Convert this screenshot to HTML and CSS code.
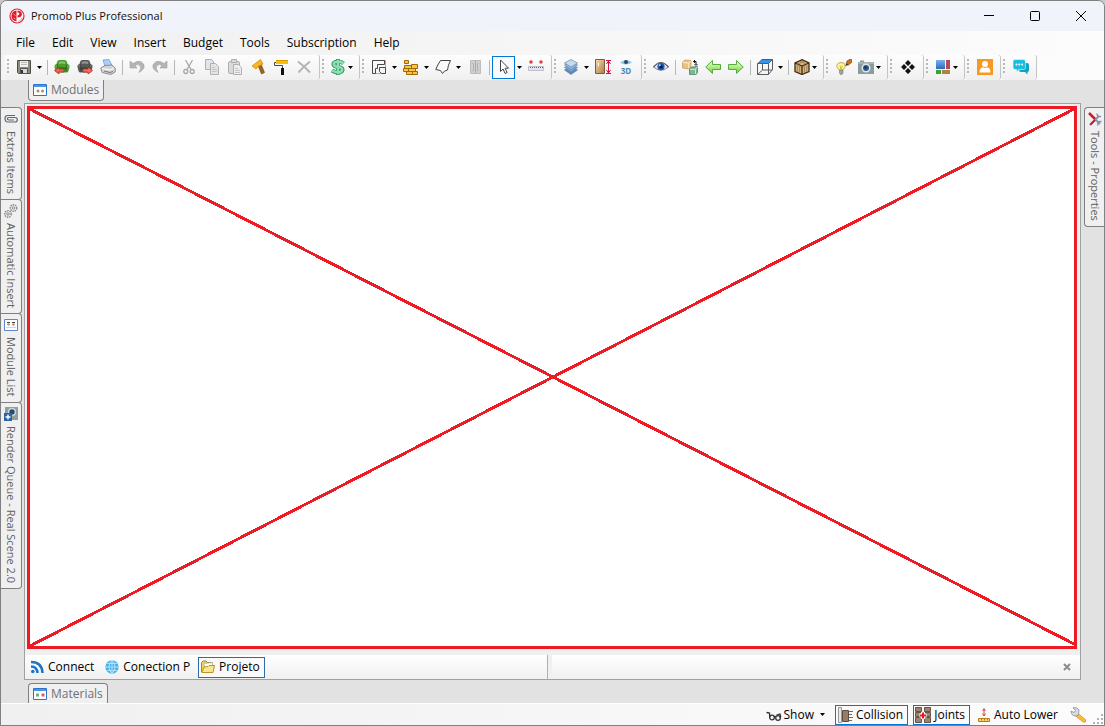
FILE: index.html
```html
<!DOCTYPE html>
<html lang="en">
<head>
<meta charset="utf-8">
<title>Promob Plus Professional</title>
<link rel="stylesheet" href="styles.css">
</head>
<body>
<svg class="defs" aria-hidden="true">
  <defs>
    <linearGradient id="gGreen" x1="0" y1="0" x2="0" y2="1"><stop offset="0" stop-color="#e4f8c8"/><stop offset=".5" stop-color="#b4ec88"/><stop offset="1" stop-color="#5cc83c"/></linearGradient>
    <linearGradient id="gWood" x1="0" y1="0" x2="1" y2="1"><stop offset="0" stop-color="#f8dcae"/><stop offset="1" stop-color="#a87c48"/></linearGradient>
    <linearGradient id="gBlue" x1="0" y1="0" x2="0" y2="1"><stop offset="0" stop-color="#78b4f0"/><stop offset="1" stop-color="#2c68b8"/></linearGradient>
    <symbol id="sofa" viewBox="0 0 16 16"><path d="M3 3Q3.500 1 5.500 1H10.500Q12.500 1 13 3L13.500 5Q16 5.500 15.500 8L14.500 12Q14 13.500 12.500 13.500H3.500Q2 13.500 1.500 12L.5 8Q0 5.500 2.500 5z"/><path d="M4.500 3Q8 1.500 11.500 3L11 5Q8 4 5 5z" fill="#fff" opacity=".35"/><path d="M4 9.500Q8 8 12 9.500M3 5.500Q4.500 8 4 12.500M13 5.500Q11.500 8 12 12.500" stroke="#111" fill="none" opacity=".5"/><path d="M1.500 7Q2.500 6 3 7.500M13 7.500Q13.500 6 14.500 7" stroke="#fff" fill="none" opacity=".4"/></symbol>
    <symbol id="grid2" viewBox="0 0 14 12"><path d="M.5.5h13v11H.5z" fill="#fff" stroke="#2c74cc"/><path d="M1 1h12v2H1z" fill="#4c94e4"/></symbol>
  </defs>
</svg>
<div class="window">
  <header class="titlebar">
    <svg class="logo" viewBox="0 0 16 16"><circle cx="8" cy="8" r="7" fill="#fff" stroke="#dc2430" stroke-width="1.200"/><path d="M7.500 2.500V13.500Q2.500 12.500 2.500 8Q2.500 3 7.500 2.500z" fill="#dc1c2c"/><path d="M8.500 2.500Q13 3 13 6.500Q12.500 9.500 8.500 9.500V7.500Q10.500 7 10.500 5.800Q10 4.500 8.500 4.500z" fill="#dc1c2c"/><path d="M9 13.500Q12.500 12.500 13.300 9.500" fill="none" stroke="#f0a0a4"/><path d="M4.500 6L6.500 7.500M4.500 10L6.500 11" stroke="#f49aa0"/></svg>
    <h1 class="title">Promob Plus Professional</h1>
    <div class="caption">
      <button class="cap" aria-label="Minimize"><svg viewBox="0 0 12 12"><path d="M1 5.500h10" /></svg></button>
      <button class="cap" aria-label="Maximize"><svg viewBox="0 0 12 12"><rect x="1.500" y="1.500" width="9" height="9" rx="1"/></svg></button>
      <button class="cap" aria-label="Close"><svg viewBox="0 0 12 12"><path d="M1 1l10 10M11 1L1 11"/></svg></button>
    </div>
  </header>

  <nav class="menubar">
    <button>File</button><button>Edit</button><button>View</button><button>Insert</button><button>Budget</button><button>Tools</button><button>Subscription</button><button>Help</button>
  </nav>

  <div class="toolbar">
    <div class="group">
      <button class="tool" aria-label="Save"><svg viewBox="0 0 16 16"><path d="M1.500 1.500h13v13h-12l-1-1z" fill="#8c8c78" stroke="#4c4c48"/><path d="M4 2h8v6H4z" fill="#f0f0ec"/><path d="M5 3.500h6M5 5.500h6" stroke="#bbb"/><path d="M4.500 9.500h7v5h-7z" fill="#d8d8d4" stroke="#555"/><path d="M5 11h2v3H5z" fill="#333"/></svg></button>
      <button class="drop" aria-label="Save options"></button>
      <i class="sep"></i>
      <button class="tool" aria-label="Import module"><svg viewBox="0 0 16 16"><use href="#sofa" fill="#48a028"/><path d="M.5 11.500L5 8v2h5v3H5v2z" fill="#e8685c" stroke="#b02c20" stroke-width=".8"/></svg></button>
      <button class="tool" aria-label="Export module"><svg viewBox="0 0 16 16"><use href="#sofa" fill="#585858"/><path d="M15.500 11.500L11 8v2H6v3h5v2z" fill="#f4705c" stroke="#b02c20" stroke-width=".8"/></svg></button>
      <button class="tool" aria-label="Print"><svg viewBox="0 0 16 16"><path d="M3 1l6-.5 3 6-7 1z" fill="#a8d0f8" stroke="#6c94c8" stroke-width=".7"/><path d="M.8 9L5 6.500l7-.5 3.200 3v4L11 15.500 2 13.500z" fill="#d4d4d8" stroke="#78787c" stroke-width=".8"/><path d="M2 9.500l8 1.500 4-2" stroke="#fff" fill="none"/><path d="M4 12l6 1.500 3-1" stroke="#777" fill="none"/></svg></button>
      <i class="sep"></i>
      <button class="tool" aria-label="Undo"><svg viewBox="0 0 16 16"><path d="M1 2v7h7L6 6.500Q9 4.500 11 6.500Q13 9 10 13.500Q17 9.500 14.500 5Q11 0 4 4.500z" fill="#b4b4b4" stroke="#a0a0a0" stroke-width=".6"/></svg></button>
      <button class="tool" aria-label="Redo"><svg viewBox="0 0 16 16"><path d="M15 2v7H8L10 6.500Q7 4.500 5 6.500Q3 9 6 13.500Q-1 9.500 1.500 5Q5 0 12 4.500z" fill="#b4b4b4" stroke="#a0a0a0" stroke-width=".6"/></svg></button>
      <i class="sep"></i>
      <button class="tool" aria-label="Cut"><svg viewBox="0 0 16 16" fill="none" stroke="#a8a8a8" stroke-width="1.300"><path d="M4.500 1L10 10.500M11.500 1L6 10.500"/><circle cx="4.800" cy="12.500" r="2"/><circle cx="11.200" cy="12.500" r="2"/></svg></button>
      <button class="tool" aria-label="Copy"><svg viewBox="0 0 16 16" fill="#e4e4e4" stroke="#b0b0b0"><path d="M1.500.5h6l2 2v8h-8z"/><path d="M6.500 4.500h5l3 3v8h-8z"/><path d="M8 8.500h3M8 10.500h5M8 12.500h5" stroke="#c4c4c4"/></svg></button>
      <button class="tool" aria-label="Paste"><svg viewBox="0 0 16 16" fill="#dadada" stroke="#b0b0b0"><rect x="1.500" y="2.500" width="11" height="12" rx="1.500"/><path d="M4.500.5h5v3h-5z"/><path d="M6.500 5.500h5l3 3v7h-8z" fill="#eee"/><path d="M8 9.500h3M8 11.500h5M8 13.500h5" stroke="#c4c4c4"/></svg></button>
      <button class="tool" aria-label="Build"><svg viewBox="0 0 16 16"><path d="M8 6.500l3-1.500 3.500 8.500-3 1.500z" fill="#9c6420" stroke="#704410" stroke-width=".6"/><path d="M2 7L10.500.5 13 5 8 7.500 6 10z" fill="#f8b81c" stroke="#c88408" stroke-width=".7"/></svg></button>
      <button class="tool" aria-label="Paint"><svg viewBox="0 0 16 16"><path d="M3 1h12v4H3z" fill="#f8bc0c"/><path d="M3 1h12v1H3z" fill="#d89c00"/><path d="M3 3.500H1.500v3h8V9" fill="none" stroke="#484848"/><path d="M8 9h3v7H8z" fill="#111"/></svg></button>
      <button class="tool" aria-label="Delete"><svg viewBox="0 0 16 16"><path d="M2 2.500Q8 7 14 13.500M14 2.500Q7 8 2.500 13.500" fill="none" stroke="#b4b4b4" stroke-width="2"/></svg></button>
    </div>
    <div class="group">
      <button class="tool tight" aria-label="Budget"><svg viewBox="0 0 16 16"><path d="M8 0v16M13.500 4.500Q11 2 7.500 2.500Q3 3 3.500 5.500Q4 7.500 8 8Q13 8.500 12.500 11Q12 13.500 8 13.500Q5 13.500 2 11.500" fill="none" stroke="#3c9870" stroke-width="4"/><path d="M8 .8v14.400M13.500 4.500Q11 2.300 7.500 2.600Q3.300 3 3.800 5.500Q4.300 7.500 8 8Q12.700 8.500 12.200 11Q11.700 13.400 8 13.400Q5 13.400 2.200 11.500" fill="none" stroke="#8ce0b0" stroke-width="2.400"/></svg></button>
      <button class="drop" aria-label="Budget options"></button>
    </div>
    <div class="group">
      <button class="tool" aria-label="Room"><svg viewBox="0 0 16 16" fill="none"><path d="M1.500 1.500h13v13h-13z" stroke="#e49090"/><path d="M1.500 14.500v-13h12v4h-7v4h-2v5z" stroke="#484848"/><path d="M8.500 8.500h6v6h-4l-2-2z" stroke="#484848" fill="#f4f4f4"/></svg></button>
      <button class="drop" aria-label="Room options"></button>
      <button class="tool" aria-label="Walls"><svg viewBox="0 0 16 16" fill="#f8c448" stroke="#a46800"><path d="M1.500 1.500h4v3h-4zM1.500 6.500h7v3h-7zM8.500 5.500h6v4h-6zM.5 9.500h5v3h-5zM5.500 9.500h7v3h-7zM3.500 12.500h6v3h-6zM9.500 12.500h5v3h-5z"/></svg></button>
      <button class="drop" aria-label="Wall options"></button>
      <button class="tool" aria-label="Shape"><svg viewBox="0 0 16 16"><path d="M5.500 1.500H15.500Q13 6 12.500 11Q9 11.500 7.500 14.500L5.500 11.500.8 10.500Q2.500 6 5.500 1.500z" fill="#fafafa" stroke="#444"/></svg></button>
      <button class="drop" aria-label="Shape options"></button>
      <button class="tool" aria-label="Cabinet"><svg viewBox="0 0 16 16"><path d="M3.500 1.500h10v13h-10z" fill="#d0d0d0" stroke="#bcbcbc"/><path d="M8.500 2v12" stroke="#ababab"/><path d="M5.500 4.500h1v7h-1M11.500 4.500h-1v7h1" fill="none" stroke="#b0b0b0"/></svg></button>
      <i class="sep"></i>
      <button class="tool active" aria-label="Select"><svg viewBox="0 0 16 16"><path d="M4.500 1v11.500l2.600-2.500 2 4.500 2-1-2-4.300h3.500z" fill="#fff" stroke="#444"/></svg></button>
      <button class="drop" aria-label="Selection options"></button>
      <button class="tool" aria-label="Dimension"><svg viewBox="0 0 16 16"><circle cx="3" cy="3" r="1.800" fill="#d84848"/><circle cx="13" cy="3" r="1.800" fill="#d84848"/><path d="M.5 7.500h15v4H.5z" fill="#e4e4ec" stroke="#c0c0cc"/><path d="M2 8.500h13" stroke="#666" stroke-dasharray="1 1"/></svg></button>
    </div>
    <div class="group">
      <button class="tool" aria-label="Layers"><svg viewBox="0 0 16 16" stroke="#6484ac" stroke-width=".7"><path d="M1.500 11l6.500 4.500L14.500 11 8 7z" fill="#5c88bc"/><path d="M1.500 8.500L8 13l6.500-4.500L8 4.500z" fill="#7ca4d0"/><path d="M1.500 6l6.500 4.500L14.500 6 8 2.500z" fill="#94bce0"/><path d="M1.500 4L8 8l6.500-4L8 .5z" fill="#c4dcf0"/></svg></button>
      <button class="drop" aria-label="Layer options"></button>
      <button class="tool" aria-label="Height"><svg viewBox="0 0 16 16"><path d="M.5.5h9v14h-9z" fill="url(#gWood)" stroke="#805c30"/><path d="M3.500 4v3" stroke="#fff"/><path d="M11 1.500h5M11 14.500h5M13.500 2v12M11.500 5l2-3 2 3M11.500 11l2 3 2-3" stroke="#d80c4c" fill="none"/></svg></button>
      <button class="tool" aria-label="3D view"><svg viewBox="0 0 16 16"><path d="M2 3.500Q8-1.500 14 3.500Q8 7.500 2 3.500z" fill="#90c4e0"/><circle cx="8" cy="3" r="2" fill="#284c6c"/><text x="8" y="15" class="threeD">3D</text></svg></button>
    </div>
    <div class="group">
      <button class="tool" aria-label="View"><svg viewBox="0 0 16 16"><path d="M.5 8Q8 0 15.500 8Q8 14.500 .5 8z" fill="#e8ecf4" stroke="#808898"/><path d="M.5 8Q8-1 15.500 8" fill="none" stroke="#585c70" stroke-width="1.200"/><circle cx="8" cy="7.700" r="3.600" fill="#1c58b4"/><circle cx="8" cy="7.700" r="1.700" fill="#081838"/><circle cx="6.700" cy="6.300" r="1" fill="#c0dcfc"/></svg></button>
      <i class="sep"></i>
      <button class="tool" aria-label="Replace"><svg viewBox="0 0 16 16"><path d="M.5 3l2.500-2 6 .5v6L7 10 .5 9z" fill="#ecc080" stroke="#c09860" stroke-width=".7"/><path d="M.8 3.500l6 .5L9 1.700M6.800 4v5.500" stroke="#fff0d0" fill="none"/><path d="M7.500 10l2-2 6-.5v6L13.500 16l-6-.5z" fill="#7cb494" stroke="#3c7458" stroke-width=".7"/><path d="M8 10.500l5.500-.3 2-2.300M13.500 10.500V15" stroke="#c8ecd8" fill="none"/><path d="M11.500 2.500H14v3M12.500 5L14 6.500 15.500 5M13 1l-1.500 1.500L13 4" fill="none" stroke="#111"/></svg></button>
      <button class="tool" aria-label="Previous"><svg viewBox="0 0 16 16"><path d="M.7 8L7.500 1.500V5.500h8v5h-8v4z" fill="url(#gGreen)" stroke="#54ac3c"/></svg></button>
      <button class="tool" aria-label="Next"><svg viewBox="0 0 16 16"><path d="M15.300 8L8.500 1.500V5.500h-8v5h8v4z" fill="url(#gGreen)" stroke="#54ac3c"/></svg></button>
      <i class="sep"></i>
      <button class="tool" aria-label="Perspective"><svg viewBox="0 0 16 16" fill="none" stroke="#585c60"><path d="M5 .5h10.500L11.500 4.500H.8z" fill="#3494ec"/><path d="M.5 4.500h11v11H.5zM15.500.5v10l-4 5M5.500 5v6h10M5.500 11l-5 4.500"/></svg></button>
      <button class="drop" aria-label="Perspective options"></button>
      <i class="sep"></i>
      <button class="tool tight" aria-label="Material view"><svg viewBox="0 0 16 16" stroke="#3c2c18"><path d="M8 .7L15 4v8.500L8 15.500 1 12.500V4z" fill="#d8b47c" stroke-width="1.300"/><path d="M1 4l7 3 7-3M8 7v8.500" fill="none" stroke-width="1.300"/><path d="M3.300 5.500v7.500M5.600 6.500v7.500M10.500 6.500v7.500M12.800 5.500v7.500M5.500 2l7 3M10.500 2l-7 3" stroke="#a88450" fill="none"/></svg></button>
      <button class="drop" aria-label="Material options"></button>
    </div>
    <div class="group wide">
      <button class="tool" aria-label="Lighting"><svg viewBox="0 0 16 16"><path d="M3.500 11Q.5 8.500 .7 6.500Q1.500 3.500 5 3.500Q8.800 3.500 9.300 6.500Q9.500 8.500 6.800 11z" fill="#fcf4a8" stroke="#c4a848"/><path d="M3.500 11h3.500v3l-1 1.500H4.500l-1-1.500z" fill="#a4a498" stroke="#777" stroke-width=".6"/><path d="M4 6.500l1 4 1.500-4" stroke="#e0b820" fill="none"/><path d="M10 5.500L11 2 14.500 0l1.500 1v2L12.500 6z" fill="#c87420" stroke="#784010" stroke-width=".7"/><path d="M9 7L11 4.500 12 6z" fill="#222"/></svg></button>
      <button class="tool tight" aria-label="Camera"><svg viewBox="0 0 16 16"><path d="M0 3h2V1.500h4V3h10v12H0z" fill="#8c9c9c"/><path d="M0 3h16v2H0z" fill="#a8b4b4"/><circle cx="8" cy="9" r="4.500" fill="#dce8f0"/><circle cx="8" cy="9" r="3" fill="#345c84"/><circle cx="7.500" cy="8.500" r="1.200" fill="#142c44"/></svg></button>
      <button class="drop" aria-label="Camera options"></button>
    </div>
    <div class="group wide">
      <button class="tool" aria-label="Components"><svg viewBox="0 0 16 16"><path d="M8 1l3 3-3 3-3-3zM8 9l3 3-3 3-3-3zM4 5l3 3-3 3-3-3zM12 5l3 3-3 3-3-3z" fill="#111"/></svg></button>
    </div>
    <div class="group wide">
      <button class="tool tight" aria-label="Layout"><svg viewBox="0 0 16 16"><path d="M1 1h9v9H1z" fill="url(#gBlue)"/><path d="M11 1h4v9h-4z" fill="#b84858"/><path d="M1 11h5v4H1z" fill="#3ca42c"/><path d="M7 11h8v4H7z" fill="#b08440"/></svg></button>
      <button class="drop" aria-label="Layout options"></button>
    </div>
    <div class="group wide">
      <button class="tool" aria-label="Account"><svg viewBox="0 0 16 16"><path d="M0 0h16v16H0z" fill="#f89820"/><circle cx="8" cy="5" r="3" fill="#fff"/><path d="M2.500 13.500Q2.500 8.500 6 8.300Q8 9.500 10 8.300Q13.500 8.500 13.500 13.500z" fill="#fff"/></svg></button>
    </div>
    <div class="group wide">
      <button class="tool" aria-label="Chat"><svg viewBox="0 0 16 16"><path d="M6 4h8q2 0 2 2v5q0 2-1.500 2v2.500L12 13H8q-2 0-2-2z" fill="#10a4c4"/><path d="M2 .5h8.500q2 0 2 2v6q0 2-2 2H6L3.500 13v-2.500H2q-2 0-2-2v-6q0-2 2-2z" fill="#18c0e0" stroke="#f4f4f4" stroke-width=".6"/><circle cx="3.500" cy="5.500" r="1" fill="#fff"/><circle cx="6.300" cy="5.500" r="1" fill="#fff"/><circle cx="9.100" cy="5.500" r="1" fill="#fff"/></svg></button>
    </div>
  </div>

  <div class="workspace">
    <div class="dock-h">
      <button class="tab top"><svg viewBox="0 0 14 12"><use href="#grid2"/><circle cx="5" cy="7" r="1.500" fill="#a89068"/><circle cx="9.500" cy="7" r="1.500" fill="#a89068"/></svg>Modules</button>
    </div>
    <div class="middle">
      <div class="dock-v">
        <button class="vtab"><svg viewBox="0 0 14 14"><path d="M11 3.500H4Q1 3.500 1 6.500Q1 10 4 10H11Q13.300 10 13.300 7.800Q13.300 5.500 11 5.500H5Q3.300 5.500 3.300 6.800Q3.300 8 5 8H10" fill="none" stroke="#5c6874" stroke-width="1.200"/></svg>Extras Items</button>
        <button class="vtab"><svg viewBox="0 0 14 14" fill="none" stroke="#8c8c90"><circle cx="9.500" cy="4" r="3.200" stroke-dasharray="1.500 .8" stroke-width="1.500"/><circle cx="9.500" cy="4" r="1.200"/><circle cx="4" cy="10" r="3.200" stroke-dasharray="1.500 .8" stroke-width="1.500"/><circle cx="4" cy="10" r="1.200"/></svg>Automatic Insert</button>
        <button class="vtab"><svg viewBox="0 0 14 14"><path d="M.5 1.500h13v11H.5z" fill="#fff" stroke="#5c88cc"/><path d="M3 4.500h3M8 4.500h3" stroke="#444"/><circle cx="4.500" cy="6.500" r="1.300" fill="#b09870"/><circle cx="9.500" cy="6.500" r="1.300" fill="#b09870"/><path d="M2 9.500h10" stroke="#c8d8e8"/></svg>Module List</button>
        <button class="vtab"><svg viewBox="0 0 14 14"><path d="M1 0h13v13H1z" fill="#90a0a0"/><circle cx="8" cy="5" r="4" fill="#d0e0e8"/><circle cx="8" cy="5" r="2.700" fill="#2c4868"/><path d="M0 6h8v8H0z" fill="#2c64a0"/><path d="M4 7.500v5M1.500 10h5" stroke="#fff" stroke-width="1.400"/></svg>Render Queue - Real Scene 2.0</button>
      </div>
      <main class="document">
        <svg class="canvas" viewBox="0 0 1050 544" preserveAspectRatio="none" role="img" aria-label="Project view"><rect x="1.500" y="1.500" width="1047" height="541" fill="#fff"/><path d="M1 2L1049 540M1049 2L1 542" /></svg>
        <div class="docbar">
          <div class="doctabs">
            <button class="doctab"><svg viewBox="0 0 14 14" fill="none" stroke="#1c74c4"><circle cx="2.800" cy="11.500" r="1.800" fill="#1c74c4" stroke="none"/><path d="M1 6.500Q7 6.500 7.500 13M1 2Q12 2 12.500 13" stroke-width="2.500"/></svg>Connect</button>
            <button class="doctab"><svg viewBox="0 0 14 14"><circle cx="7" cy="7" r="6.700" fill="#4cb4ec"/><path d="M7 0v14M0 7h14M1.500 3.500h11M1.500 10.500h11M7 .3Q1 7 7 13.700M7 .3Q13 7 7 13.700" fill="none" stroke="#c0e8fc" stroke-width=".8"/></svg>Conection P</button>
            <button class="doctab current"><svg viewBox="0 0 14 14"><path d="M.5 12V2.500L2 1h3l1 1.500h5V6" fill="#f0d468" stroke="#a88820"/><path d="M3 3.500L11.500 2.500v5L3.500 8z" fill="#fff" stroke="#999" stroke-width=".6"/><path d="M.8 12.500L3 7l4-.5L8 5.500h5.500L12 12.500z" fill="#fce488" stroke="#b89428"/></svg>Projeto</button>
          </div>
          <div class="docrest"><button class="close" aria-label="Close document"><svg viewBox="0 0 8 8"><path d="M1 1l6 6M7 1L1 7"/></svg></button></div>
        </div>
      </main>
      <div class="dock-v right">
        <button class="vtab"><svg viewBox="0 0 14 14"><path d="M8 8l4 4M3 12l8-8" stroke="#8498b8" stroke-width="2"/><path d="M9 1.500Q9 5 13 4.500M10 13.500Q9 9 13.500 9.500" stroke="#7c90b4" stroke-width="1.500" fill="none"/><path d="M1 1l6 6" stroke="#c81c2c" stroke-width="2.500"/><path d="M2 13l5-5" stroke="#b42838" stroke-width="2"/></svg>Tools - Properties</button>
      </div>
    </div>
    <div class="dock-h">
      <button class="tab bottom"><svg viewBox="0 0 14 12"><use href="#grid2"/><path d="M3 5.500h3v3H3z" fill="#70b088"/><path d="M8.500 5.500h3v3h-3z" fill="#d86060"/></svg>Materials</button>
    </div>
  </div>

  <footer class="statusbar">
    <button class="status"><svg viewBox="0 0 16 16" fill="none" stroke="#333" stroke-width="1.300"><circle cx="6" cy="10.500" r="2.300"/><circle cx="12" cy="11" r="2.300"/><path d="M8.300 10Q9 9 9.700 10M3.700 10.500L3.500 6 .5 5.500M14.300 11Q15 8.500 14 7L10.500 8"/></svg>Show<span class="caret"></span></button>
    <button class="status on"><svg viewBox="0 0 16 16"><path d="M1.500.5h3v15h-3z" fill="#e8e8e4" stroke="#999"/><path d="M5.500 3.500h6v11h-6z" fill="#947c6c" stroke="#5c4c40"/><path d="M12 4.500h4M12 7.500h3M12 10.500h4M12 13.500h3" stroke="#7c6858"/></svg>Collision</button>
    <button class="status on"><svg viewBox="0 0 16 16"><path d="M.5.5h6v4h-6zM.5 5.500h6v4h-6zM.5 10.500h6v5h-6zM9.500.5h6v4h-6zM9.500 5.500h6v4h-6zM9.500 10.500h6v5h-6z" fill="#9c8474" stroke="#685444"/><path d="M8 5v7M4.500 8.500h7" stroke="#fff" stroke-width="4"/><path d="M8 5.500v6M5 8.500h6" stroke="#e81820" stroke-width="2"/></svg>Joints</button>
    <button class="status plain"><svg viewBox="0 0 14 16"><path d="M7 1v8M5.500 4L7 2l1.500 2M5.500 6.500L7 9l1.500-2.500" fill="none" stroke="#d84848"/><path d="M1.500 11.500h11v3h-11z" fill="#fcd46c" stroke="#b87c14"/><path d="M4.500 12v1.500M7.500 12v1.500M10.500 12v1.500" stroke="#b87c14"/></svg>Auto Lower</button>
    <button class="status setup" aria-label="Settings"><svg viewBox="0 0 16 16"><path d="M7 8l7 5.500" stroke="#c88018" stroke-width="4" stroke-linecap="round"/><path d="M7 8l7 5.500" stroke="#fcbc34" stroke-width="3" stroke-linecap="round"/><path d="M1 4L4 5.500 5.500 3.500 3 .8Q7-.5 9 3L8.500 8 6 9Q1 9 1 4z" fill="#d8dce0" stroke="#888c94" stroke-width=".8"/></svg></button>
    <svg class="resize" viewBox="0 0 12 12" fill="#b0b0b0"><path d="M9 1h2v2H9zM5 5h2v2H5zM9 5h2v2H9zM1 9h2v2H1zM5 9h2v2H5zM9 9h2v2H9z"/></svg>
  </footer>
</div>
</body>
</html>
```
FILE: styles.css
```css
* { box-sizing: border-box; }
body { margin: 0; font: 12px/16px "Open Sans", "Noto Sans", sans-serif; color: #000; background: #c8c8c8; }
button { margin: 0; padding: 0; border: 0; background: none; font: inherit; color: inherit; white-space: nowrap; }
svg { display: block; flex: none; }
.defs { position: absolute; width: 0; height: 0; }
.window { display: flex; flex-direction: column; height: 100vh; border: 1px solid #808080; border-radius: 7px 7px 0 0; overflow: hidden; background: #e2e2e2; }

.titlebar { display: flex; align-items: center; height: 30px; flex: none; padding-left: 8px; background: #f0f3fa; }
.logo { width: 16px; height: 16px; }
.title { flex: 1; margin: 0 0 0 6px; font-size: 11px; font-weight: 400; color: #111; }
.caption { display: flex; }
.cap { width: 46px; height: 30px; display: grid; place-items: center; }
.cap svg { width: 12px; height: 12px; fill: none; stroke: #000; }

.menubar { display: flex; flex: none; height: 24px; padding-left: 6px; background: linear-gradient(90deg, #f0f0f0, #fcfcfc); }
.menubar button { padding: 0 8px 0 9px; }

.toolbar { display: flex; flex: none; height: 25px; padding-left: 4px; background: linear-gradient(90deg, #f4f4f4, #fcfcfc); }
.group { display: flex; align-items: center; padding: 0 4px 0 7px; margin-right: 1px; background: linear-gradient(#fdfdfd, #f0f0f0); border-radius: 3px; position: relative; box-shadow: 1px 0 #c4c4c4; }
.group.wide { padding-left: 8px; }
.group::before { content: ""; position: absolute; left: 2px; top: 4px; width: 2px; height: 15px; background: repeating-linear-gradient(#b8b8b8 0 2px, transparent 2px 4px); }
.tool { width: 23px; height: 23px; padding: 3px 3px 4px 4px; }
.tool svg { width: 16px; height: 16px; }
.tool.tight { width: 19px; padding: 3px 0 4px 3px; }
.tool.active { box-shadow: inset 0 0 0 1px #0078d7; background: #fafafa; }
.drop { width: 9px; height: 23px; display: grid; place-items: center; }
.drop::after, .caret { content: ""; width: 5px; height: 3px; background: #000; clip-path: polygon(0 0, 100% 0, 50% 100%); }
.sep { width: 1px; height: 15px; margin: 0 2px 0 3px; background: #b8b8b8; }
.threeD { font: 700 8px "Open Sans", sans-serif; fill: #4488b8; text-anchor: middle; }

.workspace { flex: 1; display: flex; flex-direction: column; min-height: 0; background: #e2e2e2; }
.dock-h { display: flex; flex: none; height: 23px; padding-left: 27px; }
.tab { display: flex; align-items: center; gap: 4px; padding: 0 4px; border: 1px solid #808080; background: #f0f0f0; color: #707070; }
.tab svg { width: 14px; height: 12px; }
.tab.top { height: 21px; border-top: 0; border-radius: 0 0 4px 4px; }
.tab.bottom { align-self: flex-end; height: 20px; border-bottom: 0; border-radius: 4px 4px 0 0; }
.middle { flex: 1; display: flex; min-height: 0; }
.dock-v { display: flex; flex-direction: column; width: 23px; padding: 4px 2px 0 0; flex: none; }
.vtab { display: flex; align-items: center; gap: 5px; padding: 4px 0 5px; width: 21px; writing-mode: vertical-rl; border: 1px solid #808080; border-left: 0; border-radius: 0 4px 4px 0; background: #f0f0f0; color: #606060; font-size: 11px; }
.vtab + .vtab { margin-top: -1px; }
.vtab svg { width: 14px; height: 14px; }
.dock-v.right { padding: 4px 0 0 3px; }
.right .vtab { width: 20px; border: 1px solid #808080; border-right: 0; border-radius: 4px 0 0 4px; }
.document { flex: 1; display: flex; flex-direction: column; min-width: 0; border: 1px solid #a0a0a0; background: #f0f0f0; }
.canvas { flex: 1; margin: 2px 3px 0 2px; min-height: 0; stroke: #ed1c24; stroke-width: 3; shape-rendering: crispEdges; }
.docbar { display: flex; flex: none; gap: 4px; height: 24px; margin-top: 6px; }
.doctabs { display: flex; flex: 1; gap: 3px; padding-left: 2px; border-right: 1px solid #b0b0b0; background: linear-gradient(#fff, #f0f0f0); }
.docrest { display: flex; flex: 1; justify-content: flex-end; align-items: center; padding-right: 9px; background: linear-gradient(#fff, #f0f0f0); }
.doctab { display: flex; align-items: center; align-self: center; gap: 4px; height: 21px; padding: 0 4px 0 2px; border: 1px solid transparent; }
.doctab svg { width: 14px; height: 14px; }
.doctab.current { border-color: #2c6ca8; background: #fafafa; }
.close svg { width: 8px; height: 8px; stroke: #8c8c8c; stroke-width: 2; }

.statusbar { display: flex; align-items: center; justify-content: flex-end; flex: none; height: 22px; border-top: 1px solid #fff; background: linear-gradient(90deg, #f0f0f0, #fcfcfc); }
.status { display: flex; align-items: center; gap: 2px; height: 20px; padding: 0 4px 0 1px; border: 1px solid transparent; margin-right: 5px; }
.status svg { width: 16px; height: 16px; }
.status.on { border-color: #0078d7; gap: 3px; }
.status.plain { gap: 3px; }
.status.plain svg { width: 14px; }
.status.setup { padding-right: 0; }
.caret { margin-left: 4px; }
.statusbar .resize { width: 12px; height: 12px; align-self: flex-end; }
```
